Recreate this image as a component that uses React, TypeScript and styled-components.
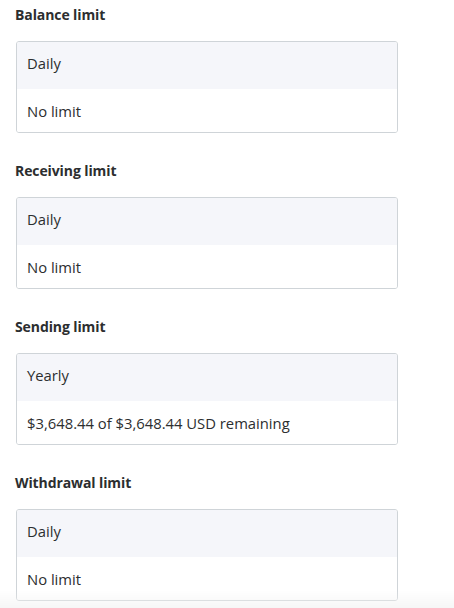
import styled, { createGlobalStyle } from "styled-components";

const limits = [
  { title: "Balance limit", period: "Daily", value: "No limit" },
  { title: "Receiving limit", period: "Daily", value: "No limit" },
  { title: "Sending limit", period: "Yearly", value: "$3,648.44 of $3,648.44 USD remaining" },
  { title: "Withdrawal limit", period: "Daily", value: "No limit" },
];

function App() {
  return (
    <>
      <GlobalStyle />
      <Page>
        {limits.map((limit) => (
          <Section key={limit.title}>
            <Heading>{limit.title}</Heading>
            <Card>
              <PeriodRow>{limit.period}</PeriodRow>
              <ValueRow>{limit.value}</ValueRow>
            </Card>
          </Section>
        ))}
      </Page>
      <BottomFade />
    </>
  );
}
export default App;

const GlobalStyle = createGlobalStyle`
  body {
    margin: 0;
    background: #ffffff;
    font-family: "Open Sans", "Noto Sans", sans-serif;
    color: #2c2e2f;
  }
`;

const Page = styled.div`
  display: flex;
  flex-direction: column;
  gap: 27px;
  padding: 4px 0 0 16px;
  width: 382px;
`;

const Section = styled.section`
  display: flex;
  flex-direction: column;
`;

const Heading = styled.h3`
  margin: 0 0 15px -1px;
  font-size: 14px;
  line-height: 22px;
  font-weight: 700;
  letter-spacing: -0.1px;
  color: #2c2e2f;
`;

const Card = styled.div`
  border: 1px solid #cfd4d8;
  border-radius: 3px;
  overflow: hidden;
`;

const Row = styled.div`
  display: flex;
  align-items: center;
  padding: 0 10px;
  font-size: 14.8px;
  color: #2c2e2f;
`;

const PeriodRow = styled(Row)`
  height: 47px;
  padding-bottom: 6px;
  box-sizing: border-box;
  background: #f5f6fa;
`;

const ValueRow = styled(Row)`
  height: 43px;
  background: #ffffff;
`;

const BottomFade = styled.div`
  position: fixed;
  left: 0;
  right: 0;
  bottom: 0;
  height: 18px;
  background: linear-gradient(rgba(240, 240, 240, 0), rgba(240, 240, 240, 0.6));
  pointer-events: none;
`;
